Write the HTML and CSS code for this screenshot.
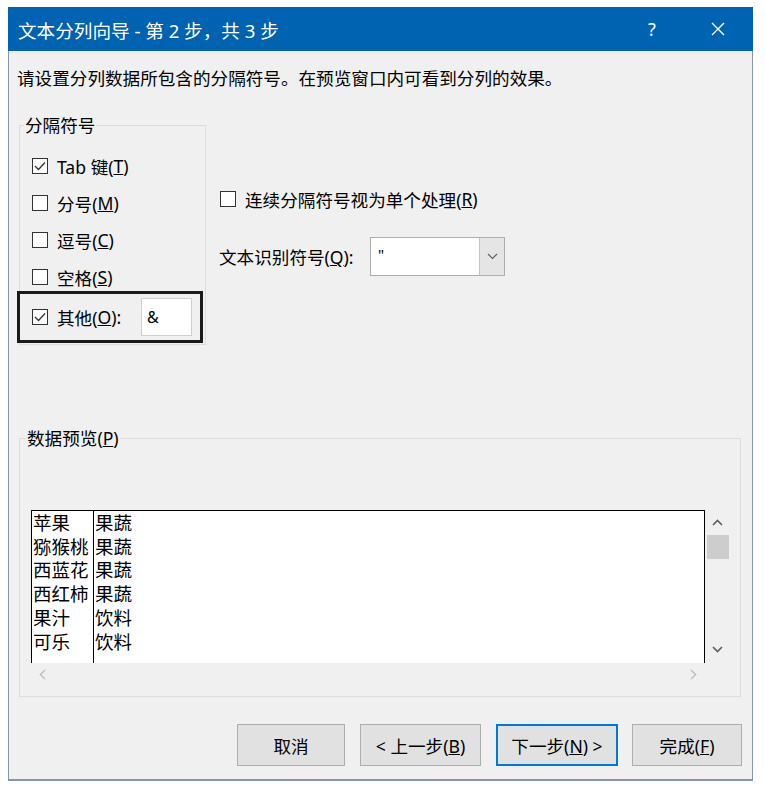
FILE: index.html
```html
<!DOCTYPE html>
<html lang="zh-CN">
<head>
<meta charset="utf-8">
<title>文本分列向导</title>
<link rel="stylesheet" href="styles.css">
</head>
<body>
<div class="window">
  <div class="titlebar">
    <span class="title">文本分列向导 - 第 2 步，共 3 步</span>
    <span class="cap help">?</span>
    <span class="cap close"><svg width="14" height="14" viewBox="0 0 14 14"><path d="M1 1 L13 13 M13 1 L1 13" stroke="#fff" stroke-width="1.4" fill="none"/></svg></span>
  </div>
  <div class="body">
    <p class="intro">请设置分列数据所包含的分隔符号。在预览窗口内可看到分列的效果。</p>
    <div class="upper">
      <fieldset class="group delims">
        <legend>分隔符号</legend>
        <div class="opts">
          <label class="opt"><span class="cb"><svg width="14" height="14" viewBox="0 0 14 14"><path d="M2 7 L5.5 10.5 L12 3.5" stroke="#333" stroke-width="1.3" fill="none"/></svg></span>Tab 键(<u>T</u>)</label>
          <label class="opt"><span class="cb"></span>分号(<u>M</u>)</label>
          <label class="opt"><span class="cb"></span>逗号(<u>C</u>)</label>
          <label class="opt"><span class="cb"></span>空格(<u>S</u>)</label>
          <div class="highlight">
            <label class="opt"><span class="cb"><svg width="14" height="14" viewBox="0 0 14 14"><path d="M2 7 L5.5 10.5 L12 3.5" stroke="#333" stroke-width="1.3" fill="none"/></svg></span>其他(<u>O</u>):</label>
            <span class="textbox">&amp;</span>
          </div>
        </div>
      </fieldset>
      <div class="side">
        <label class="opt"><span class="cb"></span>连续分隔符号视为单个处理(<u>R</u>)</label>
        <div class="qualifier">
          <span class="qlabel">文本识别符号(<u>Q</u>):</span>
          <div class="combo">
            <span class="combo-val">"</span>
            <span class="combo-btn"><svg width="11" height="7" viewBox="0 0 11 7"><path d="M1 1 L5.5 5.5 L10 1" stroke="#606060" stroke-width="1.2" fill="none"/></svg></span>
          </div>
        </div>
      </div>
    </div>
    <fieldset class="group preview">
      <legend>数据预览(<u>P</u>)</legend>
      <div class="pbox">
        <div class="data">
          <div class="col c1">
            <div>苹果</div><div>猕猴桃</div><div>西蓝花</div><div>西红柿</div><div>果汁</div><div>可乐</div>
          </div>
          <div class="col c2">
            <div>果蔬</div><div>果蔬</div><div>果蔬</div><div>果蔬</div><div>饮料</div><div>饮料</div>
          </div>
        </div>
        <div class="vscroll">
          <span class="arrow up"><svg width="11" height="7" viewBox="0 0 11 7"><path d="M1 6 L5.5 1.5 L10 6" stroke="#606060" stroke-width="1.7" fill="none"/></svg></span>
          <span class="thumb"></span>
          <span class="vspace"></span>
          <span class="arrow down"><svg width="11" height="7" viewBox="0 0 11 7"><path d="M1 1 L5.5 5.5 L10 1" stroke="#606060" stroke-width="1.7" fill="none"/></svg></span>
        </div>
        <div class="hscroll">
          <span class="harrow"><svg width="7" height="11" viewBox="0 0 7 11"><path d="M6 1 L1.5 5.5 L6 10" stroke="#c4c4c4" stroke-width="1.7" fill="none"/></svg></span>
          <span class="harrow"><svg width="7" height="11" viewBox="0 0 7 11"><path d="M1 1 L5.5 5.5 L1 10" stroke="#c4c4c4" stroke-width="1.7" fill="none"/></svg></span>
        </div>
        <div class="corner"></div>
      </div>
    </fieldset>
    <div class="buttons">
      <button class="btn w-cancel">取消</button>
      <button class="btn w-back">&lt; 上一步(<u>B</u>)</button>
      <button class="btn w-next default">下一步(<u>N</u>) &gt;</button>
      <button class="btn w-finish">完成(<u>F</u>)</button>
    </div>
  </div>
</div>
</body>
</html>
```

FILE: styles.css
```css
* { box-sizing: border-box; }

body {
  margin: 0;
  background: #ffffff;
  font-family: "Noto Sans", "Noto Sans CJK SC", sans-serif;
  font-size: 17.6px;
  color: #000;
}

.window {
  margin: 7px 0 0 8px;
  width: 745px;
  height: 774px;
  border: 1px solid #8497ac;
  border-top: none;
  border-bottom-width: 2px;
  background: #f0f0f0;
  display: flex;
  flex-direction: column;
}

.titlebar {
  height: 44px;
  margin: 0 -1px;
  background: #0063b1;
  color: #fff;
  display: flex;
  align-items: center;
  padding: 0 12px 0 10px;
}

.title {
  flex: 1;
  font-size: 18.6px;
  white-space: nowrap;
}

.cap {
  width: 46px;
  display: flex;
  justify-content: center;
  align-items: center;
}

.help {
  font-size: 18px;
  margin-right: 20px;
}

.body {
  padding: 15px 11px 0 10px;
}

.intro {
  margin: 0 0 0 -2px;
  line-height: 24px;
  white-space: nowrap;
}

.upper {
  display: flex;
  margin-top: 23px;
}

.group {
  margin: 0;
  border: 1px solid #dcdcdc;
  min-width: 0;
}

.group legend {
  line-height: 24px;
  padding: 0 1px;
}

.delims {
  width: 187px;
  padding: 17px 0 1px 12px;
}

.delims legend {
  margin-left: -8px;
}

.opts {
  display: flex;
  flex-direction: column;
  gap: 13px;
}

.opt {
  display: flex;
  align-items: center;
  height: 24px;
  white-space: nowrap;
}

.cb {
  width: 16px;
  height: 16px;
  border: 1px solid #333;
  background: #fff;
  margin-right: 9px;
  display: flex;
  align-items: center;
  justify-content: center;
  flex: none;
}

.highlight {
  margin: -11px 0 0 -15px;
  width: 186px;
  height: 52px;
  border: 3px solid #1a1a1a;
  display: flex;
  align-items: center;
  padding: 0 8px 0 12px;
}

.textbox {
  margin-left: auto;
  width: 51px;
  height: 38px;
  background: #fff;
  border: 1px solid #cfcfcf;
  display: flex;
  align-items: center;
  padding-left: 5px;
  font-size: 16px;
}

.side {
  margin-left: 14px;
  padding-top: 74px;
}

.qualifier {
  display: flex;
  align-items: center;
  margin-top: 26px;
  margin-left: -1px;
}

.qlabel {
  width: 151px;
  white-space: nowrap;
}

.combo {
  width: 135px;
  height: 39px;
  border: 1px solid #adadad;
  background: #fff;
  display: flex;
}

.combo-val {
  flex: 1;
  padding: 6px 0 0 7px;
  font-size: 15px;
  line-height: 20px;
}

.combo-btn {
  width: 25px;
  background: #e5e5e5;
  border-left: 1px solid #c4c4c4;
  display: flex;
  align-items: center;
  justify-content: center;
}

.preview {
  margin-top: 81px;
  padding: 60px 10px 11px 11px;
}

.preview legend {
  margin-left: -5px;
}

.pbox {
  height: 175px;
  display: grid;
  grid-template-columns: 1fr 25px;
  grid-template-rows: 153px 22px;
}

.data {
  background: #fff;
  border-top: 1px solid #000;
  border-left: 1px solid #000;
  border-right: 1px solid #000;
  display: flex;
  font-family: "Noto Sans CJK SC", sans-serif;
  font-size: 18.5px;
  line-height: 23.7px;
  overflow: hidden;
}

.col {
  padding-left: 1px;
  white-space: nowrap;
}

.c1 {
  width: 62px;
  border-right: 1px solid #000;
}

.vscroll {
  display: flex;
  flex-direction: column;
  align-items: center;
}

.arrow {
  height: 24px;
  width: 24px;
  display: flex;
  align-items: center;
  justify-content: center;
}

.arrow.down {
  height: 27px;
}

.thumb {
  width: 22px;
  height: 24px;
  margin-top: 1px;
  background: #cdcdcd;
}

.vspace { flex: 1; }

.hscroll {
  display: flex;
  justify-content: space-between;
  align-items: center;
  padding: 0 1px 0 0;
}

.harrow {
  width: 22px;
  height: 22px;
  display: flex;
  align-items: center;
  justify-content: center;
}

.buttons {
  margin-top: 27px;
  margin-right: -1px;
  display: flex;
  justify-content: flex-end;
  gap: 15px;
}

.btn {
  height: 42px;
  background: #e1e1e1;
  border: 1px solid #adadad;
  font-family: "Noto Sans", "Noto Sans CJK SC", sans-serif;
  font-size: 17.6px;
  color: #000;
  padding: 0;
  white-space: nowrap;
}

.btn.default {
  border: 2px solid #0078d7;
}

.w-cancel { width: 108px; }
.w-back { width: 121px; }
.w-next { width: 122px; }
.w-finish { width: 110px; margin-left: -1px; }
```
